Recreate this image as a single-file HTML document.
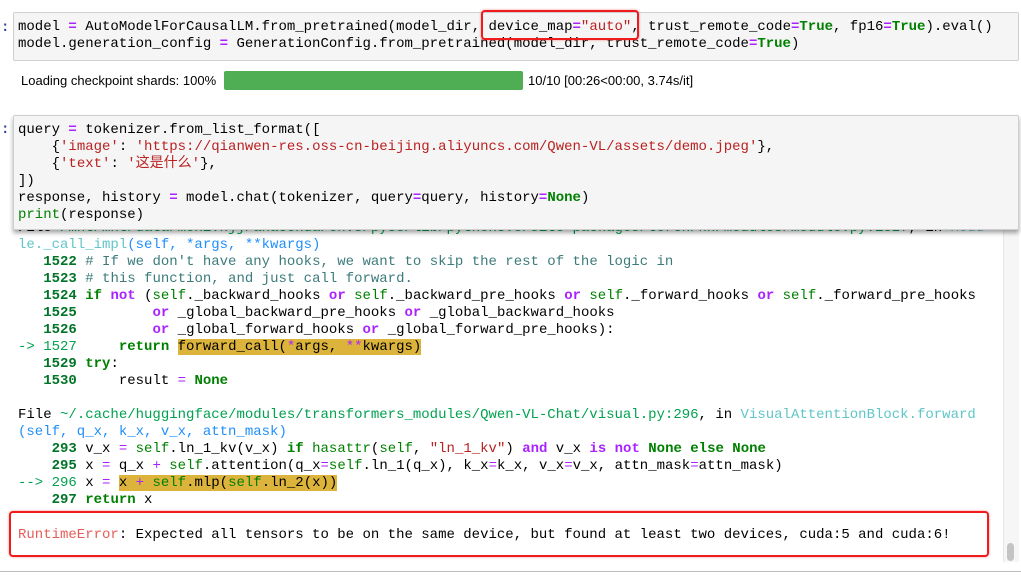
<!DOCTYPE html>
<html><head><meta charset="utf-8">
<style>
body{margin:0;width:1021px;height:578px;background:#fff;position:relative;overflow:hidden;font-family:"Liberation Mono","Noto Sans CJK SC",monospace;font-size:14px;color:#000}
.l{position:absolute;left:18px;white-space:pre;line-height:17px;height:17px}
.cell{position:absolute;left:13px;width:1004px;background:#f5f5f5;border:1px solid #cfcfcf;border-radius:2px}
.p{position:absolute;left:1px;color:#303f9f;font-weight:bold}
.g{color:#008000;font-weight:bold}
.o{color:#aa22ff;font-weight:bold}
.s{color:#ba2121}
.c{color:#3d7b7b}
.n{color:#007427;font-weight:bold}
.pg{color:#00a250}
.cy{color:#60c6c8}
.bl{color:#208ffb}
.hl{background:#dcb43c}
.red{position:absolute;border:2px solid #ee1c1c;border-radius:4px;box-shadow:0 0 2px rgba(238,28,28,.5)}
</style></head><body>
<div class="cell" style="top:12px;height:47px"></div>
<div class="p" style="top:20px">:</div>
<div class="l" style="top:19px">model <span class="o">=</span> AutoModelForCausalLM.from_pretrained(model_dir, device_map<span class="o">=</span><span class="s">"auto"</span>, trust_remote_code<span class="o">=</span><span class="g">True</span>, fp16<span class="o">=</span><span class="g">True</span>).eval()</div>
<div class="l" style="top:36px">model.generation_config <span class="o">=</span> GenerationConfig.from_pretrained(model_dir, trust_remote_code<span class="o">=</span><span class="g">True</span>)</div>
<div class="red" style="left:481px;top:10px;width:154px;height:26px"></div>

<div style="position:absolute;left:21px;top:72px;font-family:'Liberation Sans',sans-serif;font-size:13px;line-height:17px">Loading checkpoint shards: 100%</div>
<div style="position:absolute;left:224px;top:71px;width:299px;height:19px;background:#4fae53;border-radius:2px"></div>
<div style="position:absolute;left:528px;top:72px;font-family:'Liberation Sans',sans-serif;font-size:13px;line-height:17px">10/10 [00:26&lt;00:00, 3.74s/it]</div>

<div style="position:absolute;left:0;top:229px;width:1003px;height:333px;background:#fff;border-right:1px solid #e6e6e6"></div>
<div style="position:absolute;left:1004px;top:229px;width:15px;height:333px;background:#f6f6f6"></div>
<div style="position:absolute;left:1007px;top:543px;width:7px;height:18px;background:#c4c4c4;border-radius:4px"></div>
<div style="position:absolute;left:0;top:571px;width:1021px;height:1px;background:#bdbdbd"></div>

<div class="l" style="top:220px">File <span class="pg">/mnt/mnt/data/moxi.hjj/anaconda/envs/py38/lib/python3.8/site-packages/torch/nn/modules/module.py:1527</span>, in <span class="cy">Modu</span></div>
<div class="l" style="top:237px"><span class="cy">le._call_impl</span><span class="bl">(self, *args, **kwargs)</span></div>
<div class="l" style="top:254px">   <span class="n">1522</span> <span class="c"># If we don't have any hooks, we want to skip the rest of the logic in</span></div>
<div class="l" style="top:271px">   <span class="n">1523</span> <span class="c"># this function, and just call forward.</span></div>
<div class="l" style="top:288px">   <span class="n">1524</span> <span class="g">if</span> <span class="o">not</span> (<span style="color:#008000">self</span>._backward_hooks <span class="o">or</span> <span style="color:#008000">self</span>._backward_pre_hooks <span class="o">or</span> <span style="color:#008000">self</span>._forward_hooks <span class="o">or</span> <span style="color:#008000">self</span>._forward_pre_hooks</div>
<div class="l" style="top:305px">   <span class="n">1525</span>         <span class="o">or</span> _global_backward_pre_hooks <span class="o">or</span> _global_backward_hooks</div>
<div class="l" style="top:322px">   <span class="n">1526</span>         <span class="o">or</span> _global_forward_hooks <span class="o">or</span> _global_forward_pre_hooks):</div>
<div class="l" style="top:339px"><span style="color:#00a250">-&gt; 1527</span>     <span class="g">return</span> <span class="hl">forward_call(<span class="o" style="font-weight:normal">*</span>args, <span class="o" style="font-weight:normal">**</span>kwargs)</span></div>
<div class="l" style="top:356px">   <span class="n">1529</span> <span class="g">try</span>:</div>
<div class="l" style="top:373px">   <span class="n">1530</span>     result <span class="o" style="font-weight:normal">=</span> <span class="g">None</span></div>

<div class="l" style="top:407px">File <span class="pg">~/.cache/huggingface/modules/transformers_modules/Qwen-VL-Chat/visual.py:296</span>, in <span class="cy">VisualAttentionBlock.forward</span></div>
<div class="l" style="top:424px"><span class="bl">(self, q_x, k_x, v_x, attn_mask)</span></div>
<div class="l" style="top:441px">    <span class="n">293</span> v_x <span class="o" style="font-weight:normal">=</span> <span style="color:#008000">self</span>.ln_1_kv(v_x) <span class="g">if</span> <span style="color:#008000">hasattr</span>(<span style="color:#008000">self</span>, <span class="s">"ln_1_kv"</span>) <span class="o">and</span> v_x <span class="o">is</span> <span class="o">not</span> <span class="g">None</span> <span class="g">else</span> <span class="g">None</span></div>
<div class="l" style="top:458px">    <span class="n">295</span> x <span class="o" style="font-weight:normal">=</span> q_x <span class="o" style="font-weight:normal">+</span> <span style="color:#008000">self</span>.attention(q_x<span class="o" style="font-weight:normal">=</span><span style="color:#008000">self</span>.ln_1(q_x), k_x<span class="o" style="font-weight:normal">=</span>k_x, v_x<span class="o" style="font-weight:normal">=</span>v_x, attn_mask<span class="o" style="font-weight:normal">=</span>attn_mask)</div>
<div class="l" style="top:475px"><span style="color:#00a250">--&gt; 296</span> x <span class="o" style="font-weight:normal">=</span> <span class="hl">x <span class="o" style="font-weight:normal">+</span> <span style="color:#008000">self</span>.mlp(<span style="color:#008000">self</span>.ln_2(x))</span></div>
<div class="l" style="top:492px">    <span class="n">297</span> <span class="g">return</span> x</div>

<div class="red" style="left:9px;top:511px;width:976px;height:42px"></div>
<div class="l" style="top:527px"><span style="color:#e75c58">RuntimeError</span>: Expected all tensors to be on the same device, but found at least two devices, cuda:5 and cuda:6!</div>

<div class="cell" style="top:115px;height:113px;box-shadow:0 3px 4px rgba(0,0,0,.35)"></div>
<div class="p" style="top:122px">:</div>
<div class="l" style="top:122px">query <span class="o">=</span> tokenizer.from_list_format([</div>
<div class="l" style="top:139px">    {<span class="s">'image'</span>: <span class="s">'https://qianwen-res.oss-cn-beijing.aliyuncs.com/Qwen-VL/assets/demo.jpeg'</span>},</div>
<div class="l" style="top:156px">    {<span class="s">'text'</span>: <span class="s">'这是什么'</span>},</div>
<div class="l" style="top:173px">])</div>
<div class="l" style="top:190px">response, history <span class="o">=</span> model.chat(tokenizer, query<span class="o">=</span>query, history<span class="o">=</span><span class="g">None</span>)</div>
<div class="l" style="top:207px"><span style="color:#008000">print</span>(response)</div>
</body></html>
